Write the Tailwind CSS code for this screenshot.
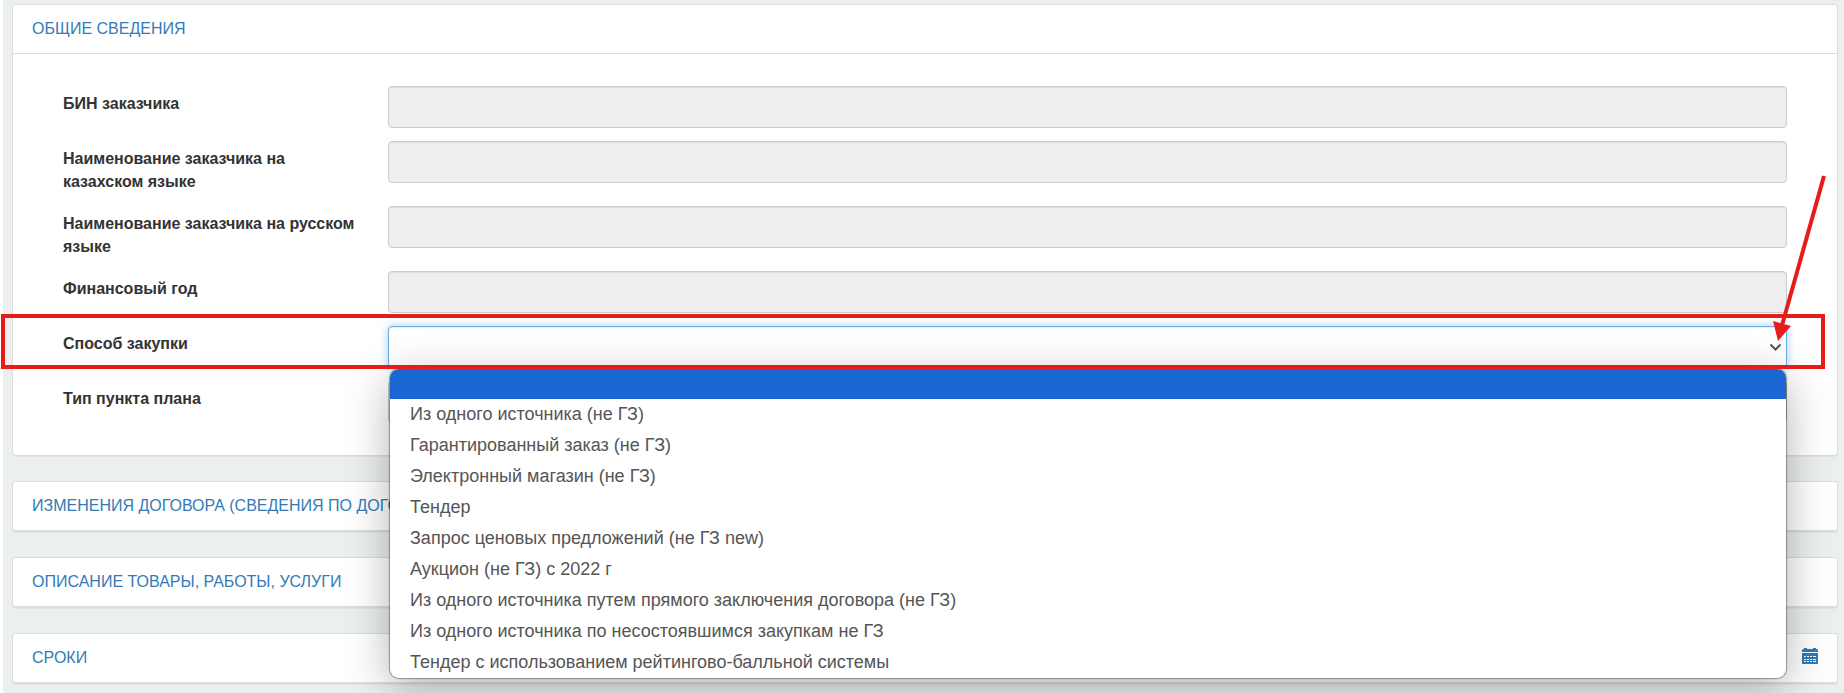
<!DOCTYPE html>
<html lang="ru">

<head>
    <meta charset="UTF-8" />
    <title>Общие сведения</title>
    <meta name="viewport" content="width=device-width, initial-scale=1.0" />
    <script src="https://cdn.jsdelivr.net/npm/@tailwindcss/browser@4"></script>
</head>

<body class="bg-white pl-[3px] font-['Liberation_Sans',Arial,sans-serif] text-base text-[#333333]">
    <main class="flex min-h-screen flex-col gap-[25px] bg-[#ebefef] pt-1 pl-[9px] pr-[6px]">

        <!-- General information -->
        <section class="bg-white border border-[#dddddd] rounded shadow-[0_1px_1px_rgba(0,0,0,0.05)]">
            <h2 class="border-b border-[#dddddd] px-[19px] py-3 leading-6"><a href="#general" class="text-[#337ab7]">ОБЩИЕ СВЕДЕНИЯ</a></h2>
            <form class="flex flex-col gap-[13px] px-[50px] py-8 font-bold">
                <div class="flex items-start">
                    <label for="bin" class="w-[325px] shrink-0 pt-[6px] pr-5 leading-[23px]">БИН заказчика</label>
                    <input id="bin" type="text" readonly class="h-[42px] grow rounded border border-[#cccccc] bg-[#eeeeee] px-4 shadow-[inset_0_1px_1px_rgba(0,0,0,0.075)]" />
                </div>
                <div class="flex items-start">
                    <label for="name-kz" class="w-[325px] shrink-0 pt-[6px] pr-5 leading-[23px]">Наименование заказчика на казахском языке</label>
                    <input id="name-kz" type="text" readonly class="h-[42px] grow rounded border border-[#cccccc] bg-[#eeeeee] px-4 shadow-[inset_0_1px_1px_rgba(0,0,0,0.075)]" />
                </div>
                <div class="flex items-start">
                    <label for="name-ru" class="w-[325px] shrink-0 pt-[6px] pr-5 leading-[23px]">Наименование заказчика на русском языке</label>
                    <input id="name-ru" type="text" readonly class="h-[42px] grow rounded border border-[#cccccc] bg-[#eeeeee] px-4 shadow-[inset_0_1px_1px_rgba(0,0,0,0.075)]" />
                </div>
                <div class="flex items-start">
                    <label for="year" class="w-[325px] shrink-0 pt-[6px] pr-5 leading-[23px]">Финансовый год</label>
                    <input id="year" type="text" readonly class="h-[42px] grow rounded border border-[#cccccc] bg-[#eeeeee] px-4 shadow-[inset_0_1px_1px_rgba(0,0,0,0.075)]" />
                </div>
                <div class="relative z-10 flex items-start">
                    <label for="method" class="w-[325px] shrink-0 pt-[6px] pr-5 leading-[23px]">Способ закупки</label>
                    <div class="relative grow">
                        <select id="method" class="block h-[42px] w-full appearance-none rounded border border-[#66afe9] bg-white px-4 font-normal outline-none shadow-[inset_0_1px_1px_rgba(0,0,0,0.075),0_0_8px_rgba(102,175,233,0.6)]">
                            <option></option>
                            <option>Из одного источника (не ГЗ)</option>
                            <option>Гарантированный заказ (не ГЗ)</option>
                            <option>Электронный магазин (не ГЗ)</option>
                            <option>Тендер</option>
                            <option>Запрос ценовых предложений (не ГЗ new)</option>
                            <option>Аукцион (не ГЗ) с 2022 г</option>
                            <option>Из одного источника путем прямого заключения договора (не ГЗ)</option>
                            <option>Из одного источника по несостоявшимся закупкам не ГЗ</option>
                            <option>Тендер с использованием рейтингово-балльной системы</option>
                        </select>
                        <svg class="pointer-events-none absolute right-[5px] top-[17px] h-[9px] w-[13px]" viewBox="0 0 13 9" fill="none" stroke="#555555" stroke-width="2">
                            <path d="M1.5 1.5 L6.5 6.5 L11.5 1.5" />
                        </svg>
                        <!-- opened list -->
                        <ul role="listbox" aria-label="Способ закупки" class="absolute left-[2px] right-px top-[43px] overflow-hidden rounded-[9px] bg-white text-lg leading-[31px] font-normal text-[#555555] shadow-[0_0_1px_1px_rgba(0,0,0,0.35),0_10px_45px_rgba(0,0,0,0.3)]">
                            <li role="option" aria-selected="true" class="h-[30px] bg-[#1967d2]"></li>
                            <li role="option" class="px-5">Из одного источника (не ГЗ)</li>
                            <li role="option" class="px-5">Гарантированный заказ (не ГЗ)</li>
                            <li role="option" class="px-5">Электронный магазин (не ГЗ)</li>
                            <li role="option" class="px-5">Тендер</li>
                            <li role="option" class="px-5">Запрос ценовых предложений (не ГЗ new)</li>
                            <li role="option" class="px-5">Аукцион (не ГЗ) с 2022 г</li>
                            <li role="option" class="px-5">Из одного источника путем прямого заключения договора (не ГЗ)</li>
                            <li role="option" class="px-5">Из одного источника по несостоявшимся закупкам не ГЗ</li>
                            <li role="option" class="px-5">Тендер с использованием рейтингово-балльной системы</li>
                        </ul>
                    </div>
                    <!-- highlight frame and arrow -->
                    <div class="pointer-events-none absolute -left-[62px] -right-[38px] -top-3 h-[55px] border-4 border-[#e81b1b]"></div>
                    <svg class="pointer-events-none absolute -right-[42px] -top-[152px] h-[170px] w-[60px]" viewBox="0 0 60 170" fill="#e81b1b">
                        <path d="M55 2 L12 155" stroke="#e81b1b" stroke-width="4" />
                        <path d="M4 147 L22 152 L9 167 Z" />
                    </svg>
                </div>
                <div class="flex items-start">
                    <label for="type" class="w-[325px] shrink-0 pt-[6px] pr-5 leading-[23px]">Тип пункта плана</label>
                    <input id="type" type="text" readonly class="h-[42px] grow rounded border border-[#cccccc] bg-[#eeeeee] px-4 shadow-[inset_0_1px_1px_rgba(0,0,0,0.075)]" />
                </div>
            </form>
        </section>

        <section class="rounded border border-b-2 border-[#dddddd] bg-white shadow-[0_1px_1px_rgba(0,0,0,0.05)]">
            <h2 class="px-[19px] py-3 leading-6"><a href="#changes" class="text-[#337ab7]">ИЗМЕНЕНИЯ ДОГОВОРА (СВЕДЕНИЯ ПО ДОГОВОРУ)</a></h2>
        </section>

        <section class="rounded border border-b-2 border-[#dddddd] bg-white shadow-[0_1px_1px_rgba(0,0,0,0.05)]">
            <h2 class="px-[19px] py-3 leading-6"><a href="#description" class="text-[#337ab7]">ОПИСАНИЕ ТОВАРЫ, РАБОТЫ, УСЛУГИ</a></h2>
        </section>

        <section class="rounded border border-b-2 border-[#dddddd] bg-white shadow-[0_1px_1px_rgba(0,0,0,0.05)]">
            <h2 class="flex items-center justify-between px-[19px] py-3 leading-6">
                <a href="#terms" class="text-[#337ab7]">СРОКИ</a>
                <svg class="mb-1 h-4 w-4 text-[#337ab7]" viewBox="0 0 16 16" fill="currentColor">
                    <path d="M2 0h3v1h6V0h3v1h1l1 1v2H0V2l1-1h1z" />
                    <path fill-rule="evenodd" d="M0 5h16v11H0zM2 8v1h2V8zM5 8v1h2V8zM8 8v1h2V8zM11 8v1h3V8zM2 11v1h2v-1zM5 11v1h2v-1zM8 11v1h2v-1zM11 11v1h3v-1zM2 13v1h2v-1zM5 13v1h2v-1zM8 13v1h2v-1zM11 13v1h3v-1z" />
                </svg>
            </h2>
        </section>
    </main>
</body>

</html>
